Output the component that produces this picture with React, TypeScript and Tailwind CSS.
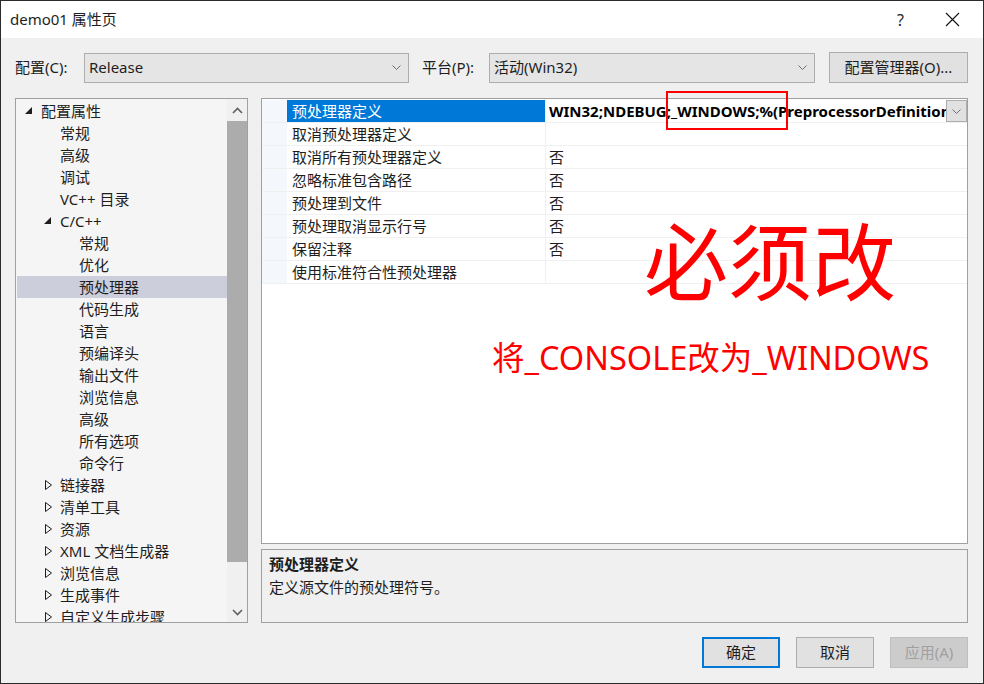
import React from "react";

type TreeNode = {
  label: string;
  level: number;
  arrow?: "open" | "closed";
  selected?: boolean;
};

const tree: TreeNode[] = [
  { label: "配置属性", level: 0, arrow: "open" },
  { label: "常规", level: 1 },
  { label: "高级", level: 1 },
  { label: "调试", level: 1 },
  { label: "VC++ 目录", level: 1 },
  { label: "C/C++", level: 1, arrow: "open" },
  { label: "常规", level: 2 },
  { label: "优化", level: 2 },
  { label: "预处理器", level: 2, selected: true },
  { label: "代码生成", level: 2 },
  { label: "语言", level: 2 },
  { label: "预编译头", level: 2 },
  { label: "输出文件", level: 2 },
  { label: "浏览信息", level: 2 },
  { label: "高级", level: 2 },
  { label: "所有选项", level: 2 },
  { label: "命令行", level: 2 },
  { label: "链接器", level: 1, arrow: "closed" },
  { label: "清单工具", level: 1, arrow: "closed" },
  { label: "资源", level: 1, arrow: "closed" },
  { label: "XML 文档生成器", level: 1, arrow: "closed" },
  { label: "浏览信息", level: 1, arrow: "closed" },
  { label: "生成事件", level: 1, arrow: "closed" },
  { label: "自定义生成步骤", level: 1, arrow: "closed" },
];

const props: [string, string][] = [
  ["预处理器定义", "WIN32;NDEBUG;_WINDOWS;%(PreprocessorDefinitions)"],
  ["取消预处理器定义", ""],
  ["取消所有预处理器定义", "否"],
  ["忽略标准包含路径", "否"],
  ["预处理到文件", "否"],
  ["预处理取消显示行号", "否"],
  ["保留注释", "否"],
  ["使用标准符合性预处理器", ""],
];

const levelPad = ["pl-[8px]", "pl-[27px]", "pl-[46px]"];

const Chevron = ({ className = "" }: { className?: string }) => (
  <svg width="9" height="5" viewBox="0 0 9 5" className={className}>
    <polyline points="0.5,0.5 4.5,4.5 8.5,0.5" fill="none" stroke="#6d6d6d" strokeWidth="1" />
  </svg>
);

const TreeArrow = ({ kind }: { kind?: "open" | "closed" }) => (
  <span className="w-[16px] h-[22px] flex items-center shrink-0">
    {kind === "open" && (
      <svg width="8" height="8" viewBox="0 0 8 8">
        <polygon points="7,0 7,7 0,7" fill="#1e1e1e" />
      </svg>
    )}
    {kind === "closed" && (
      <svg width="8" height="10" viewBox="0 0 8 10" className="ml-[1px]">
        <polygon points="0.5,0.5 6.5,5 0.5,9.5" fill="none" stroke="#1e1e1e" strokeWidth="1" />
      </svg>
    )}
  </span>
);

const App: React.FC = () => {
  return (
    <div className="w-[984px] h-[684px] border border-[#2b2b2b] bg-[#f0f0f0] flex flex-col font-['Noto_Sans','Noto_Sans_CJK_SC',sans-serif] text-[15px] text-[#1e1e1e] overflow-hidden">
      {/* title bar */}
      <div className="h-[37px] bg-white flex items-center pl-[9px] shrink-0">
        <span className="leading-none">demo01 属性页</span>
        <span className="ml-auto mr-[41px] leading-none text-[16px]">?</span>
        <svg width="15" height="15" viewBox="0 0 15 15" className="mr-[23px]">
          <path d="M1 1 L14 14 M14 1 L1 14" stroke="#111" strokeWidth="1.1" />
        </svg>
      </div>

      <div className="flex-1 flex flex-col pl-[14px] pr-[15px]">
        {/* configuration row */}
        <div className="mt-[14px] h-[31px] flex items-center shrink-0">
          <span className="w-[69px] leading-none shrink-0">配置(C):</span>
          <div className="w-[325px] h-[30px] bg-[#e5e5e5] border border-[#adadad] flex items-center px-[4px] shrink-0">
            <span className="leading-none">Release</span>
            <Chevron className="ml-auto mr-[3px]" />
          </div>
          <span className="ml-[13px] w-[67px] leading-none shrink-0">平台(P):</span>
          <div className="w-[326px] h-[30px] bg-[#e5e5e5] border border-[#adadad] flex items-center px-[4px] shrink-0">
            <span className="leading-none">活动(Win32)</span>
            <Chevron className="ml-auto mr-[3px]" />
          </div>
          <button className="ml-[14px] w-[139px] h-[31px] bg-[#e1e1e1] border border-[#adadad] leading-none shrink-0">
            配置管理器(O)...
          </button>
        </div>

        {/* main area */}
        <div className="mt-[15px] h-[525px] flex shrink-0">
          {/* tree */}
          <div className="w-[233px] h-full border border-[#a0a0a0] bg-[#f5f5f5] flex overflow-hidden shrink-0">
            <div className="flex-1 min-w-0 pt-[1px] pl-[1px] overflow-hidden">
              {tree.map((n, i) => (
                <div
                  key={i}
                  className={`h-[22px] flex items-center whitespace-nowrap ${levelPad[n.level]} ${
                    n.selected ? "bg-[#cccedb]" : ""
                  }`}
                >
                  <TreeArrow kind={n.arrow} />
                  <span className="leading-[20px]">{n.label}</span>
                </div>
              ))}
            </div>
            <div className="w-[20px] h-full bg-[#f0f0f0] flex flex-col items-center shrink-0">
              <div className="h-[22px] flex items-center justify-center">
                <svg width="11" height="7" viewBox="0 0 11 7">
                  <polyline points="1,6 5.5,1.5 10,6" fill="none" stroke="#606060" strokeWidth="1.6" />
                </svg>
              </div>
              <div className="w-[20px] h-[441px] bg-[#acacac]" />
              <div className="flex-1 flex items-end pb-[6px]">
                <svg width="11" height="7" viewBox="0 0 11 7">
                  <polyline points="1,1 5.5,5.5 10,1" fill="none" stroke="#606060" strokeWidth="1.6" />
                </svg>
              </div>
            </div>
          </div>

          {/* right side */}
          <div className="ml-[13px] flex-1 min-w-0 flex flex-col">
            <div className="relative h-[446px] border border-[#a0a0a0] bg-white shrink-0">
              <div className="pt-[1px]">
                {props.map(([name, value], i) => (
                  <div key={i} className="h-[23px] flex border-b border-[#f0f0f0]">
                    <div className="w-[25px] bg-[#f4f7fb] shrink-0" />
                    <div
                      className={`w-[259px] shrink-0 flex items-center pl-[5px] border-r border-[#f0f0f0] whitespace-nowrap ${
                        i === 0 ? "bg-[#0078d7] text-white" : ""
                      }`}
                    >
                      <span className="leading-[20px]">{name}</span>
                    </div>
                    <div className="flex-1 min-w-0 flex items-center pl-[3px] overflow-hidden">
                      <span
                        className={`leading-[20px] whitespace-nowrap overflow-hidden flex-1 min-w-0 ${
                          i === 0 ? "font-bold text-black" : ""
                        }`}
                      >
                        {value}
                      </span>
                      {i === 0 && (
                        <div className="w-[21px] h-[22px] bg-[#e1e1e1] border border-[#adadad] flex items-center justify-center shrink-0">
                          <Chevron />
                        </div>
                      )}
                    </div>
                  </div>
                ))}
              </div>

              {/* annotations */}
              <div className="absolute left-[404px] top-[-8px] w-[122px] h-[39px] border-2 border-[#ff0000]" />
              <div className="absolute left-[382px] top-[117px] text-[84px] leading-none text-[#ff0000] font-['Noto_Sans_CJK_SC',sans-serif] whitespace-nowrap">
                必须改
              </div>
              <div className="absolute left-[230px] top-[243px] text-[32.5px] leading-none text-[#ff0000] whitespace-nowrap">
                将_CONSOLE改为_WINDOWS
              </div>
            </div>

            <div className="mt-[5px] flex-1 border border-[#a0a0a0] bg-[#f0f0f0] pl-[7px] pt-[5px]">
              <div className="font-bold leading-[18px]">预处理器定义</div>
              <div className="mt-[5px] leading-[18px]">定义源文件的预处理符号。</div>
            </div>
          </div>
        </div>

        {/* buttons */}
        <div className="mt-[14px] flex justify-end gap-[16px]">
          <button className="w-[78px] h-[31px] bg-[#e1e1e1] border-2 border-[#0078d7] leading-none">确定</button>
          <button className="w-[78px] h-[31px] bg-[#e1e1e1] border border-[#adadad] leading-none">取消</button>
          <button className="w-[78px] h-[31px] bg-[#cccccc] border border-[#bfbfbf] text-[#a0a0a0] leading-none">
            应用(A)
          </button>
        </div>
      </div>
    </div>
  );
};

export default App;
